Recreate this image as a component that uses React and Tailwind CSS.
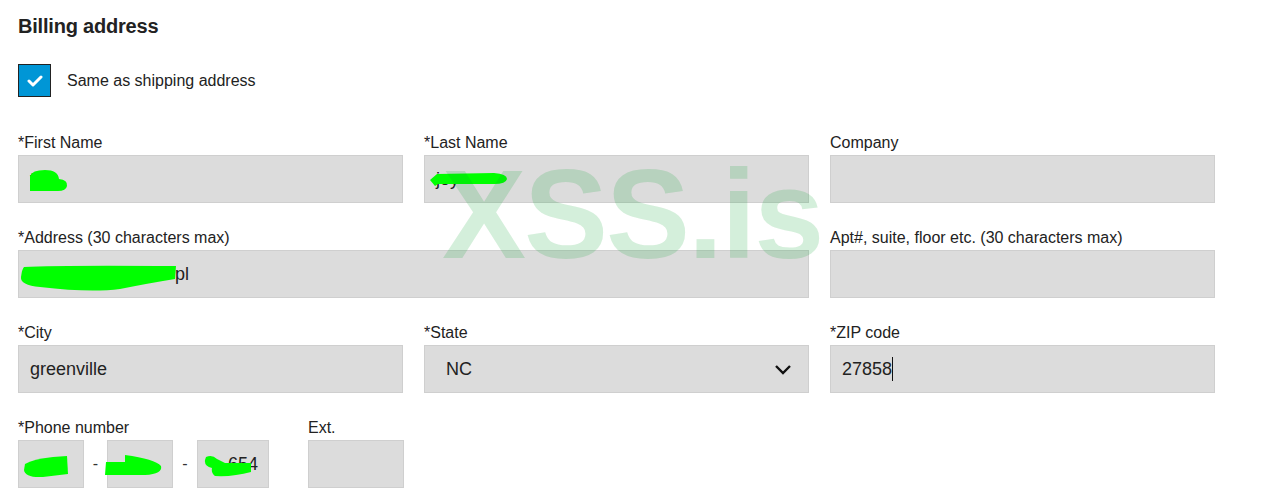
import React from "react";

const font = { fontFamily: '"Liberation Sans", Arial, sans-serif' };

const Field = ({ label, className = "", children }) => (
  <div className={`flex flex-col ${className}`}>
    <label className="text-[16px] leading-5 text-[#222] mb-[2px]">{label}</label>
    {children}
  </div>
);

const Box = ({ className = "", children }) => (
  <div
    className={`relative h-[48px] bg-[#dcdcdc] border border-[#cfcfcf] flex items-center text-[18px] text-[#222] ${className}`}
  >
    {children}
  </div>
);

// green redaction scribble
const Blob = ({ className, d, w, h }) => (
  <svg className={`absolute ${className}`} width={w} height={h} viewBox={`0 0 ${w} ${h}`}>
    <path d={d} fill="#00ff00" />
  </svg>
);

export default function App() {
  return (
    <div className="relative w-[1262px] h-[494px] bg-white overflow-hidden px-[18px]" style={font}>
      <h2 className="pt-[12px] text-[20px] leading-7 font-semibold text-[#222] tracking-[-0.2px]">
        Billing address
      </h2>

      <div className="mt-[24px] flex items-center gap-[16px]">
        <div className="w-[33px] h-[33px] bg-[#0096d6] border border-[#222] flex items-center justify-center">
          <svg width="16" height="13" viewBox="0 0 16 13">
            <path d="M2 7 L6 11 L14 3" stroke="#fff" strokeWidth="3" fill="none" strokeLinecap="round" strokeLinejoin="round" />
          </svg>
        </div>
        <span className="text-[16px] text-[#222]">Same as shipping address</span>
      </div>

      <div className="mt-[36px] grid grid-cols-[385px_385px_385px] gap-x-[21px] gap-y-[25px]">
        <Field label="*First Name">
          <Box className="pl-[11px]">
            <span>t</span>
            <Blob className="left-[11px] top-[14px]" w={39} h={22} d="M0 6 Q2 0 15 0 Q28 0 29 9 Q38 10 37 16 Q36 21 28 21 L0 21 Z" />
          </Box>
        </Field>
        <Field label="*Last Name">
          <Box className="pl-[11px]">
            <span>joy</span>
            <Blob className="left-[5px] top-[17px]" w={78} h={14} d="M0 7 L7 1 L64 0 Q77 1 77 6 Q76 11 64 11 L8 11 L5 13 Z" />
          </Box>
        </Field>
        <Field label="Company">
          <Box />
        </Field>

        <Field label="*Address (30 characters max)" className="col-span-2">
          <Box className="pl-[11px]">
            <span className="pl-[130px]">e pl</span>
            <Blob className="left-[1px] top-[14px]" w={158} h={28} d="M4 2 Q40 0 156 1 L155 14 Q130 18 100 24 Q70 28 20 22 Q0 20 1 12 Q2 4 4 2 Z" />
          </Box>
        </Field>
        <Field label="Apt#, suite, floor etc. (30 characters max)">
          <Box />
        </Field>

        <Field label="*City">
          <Box className="pl-[11px]">greenville</Box>
        </Field>
        <Field label="*State">
          <Box className="pl-[21px] pr-[16px] justify-between">
            <span>NC</span>
            <svg width="18" height="11" viewBox="0 0 18 11">
              <path d="M2 2 L9 9 L16 2" stroke="#111" strokeWidth="2.4" fill="none" />
            </svg>
          </Box>
        </Field>
        <Field label="*ZIP code">
          <Box className="pl-[11px] border-[#999]">
            <span>27858</span>
            <span className="w-px h-[24px] bg-[#111]" />
          </Box>
        </Field>

        <div className="col-span-3 flex">
          <Field label="*Phone number">
            <div className="flex items-center">
              <Box className="w-[66px] pl-[10px]">
                <Blob className="left-[4px] top-[15px]" w={46} h={22} d="M2 8 Q10 3 30 1 L44 0 L45 18 L20 21 Q2 22 1 14 Z" />
              </Box>
              <span className="w-[23px] text-center text-[16px] text-[#333]">-</span>
              <Box className="w-[66px]">
                <Blob className="left-[-3px] top-[13px]" w={58} h={22} d="M1 8 L20 8 L20 1 Q50 5 56 12 Q58 20 40 21 L0 21 Z" />
              </Box>
              <span className="w-[24px] text-center text-[16px] text-[#333]">-</span>
              <Box className="w-[72px] pl-[30px]">
                <span>654</span>
                <Blob className="left-[5px] top-[14px]" w={48} h={24} d="M3 2 Q9 -1 14 4 L22 8 L48 8 L48 17 Q30 22 12 21 Q8 18 9 13 Q1 11 2 5 Z" />
              </Box>
            </div>
          </Field>
          <Field label="Ext." className="ml-[39px]">
            <Box className="w-[96px]" />
          </Field>
        </div>
      </div>

      <div
        className="absolute left-[442px] top-[152px] text-[126px] leading-none font-bold text-[rgba(0,160,40,0.17)] pointer-events-none tracking-[-2px]"
        style={{ fontFamily: '"Liberation Sans", Arial, sans-serif' }}
      >
        XSS.is
      </div>
    </div>
  );
}
